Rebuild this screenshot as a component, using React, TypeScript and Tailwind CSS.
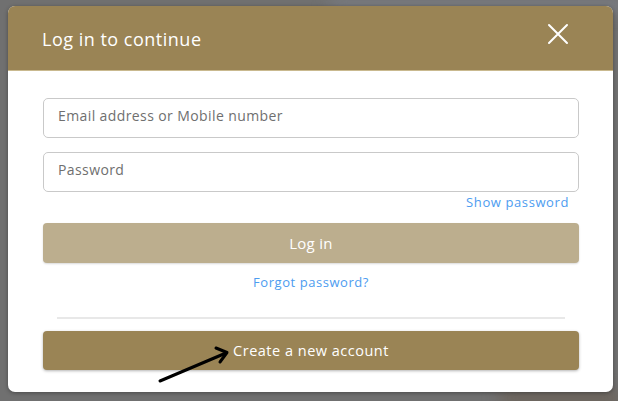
import React from "react";

export default function App() {
  const font = { fontFamily: '"Open Sans", "Noto Sans", sans-serif' };
  return (
    <div className="relative w-[618px] h-[401px] overflow-hidden bg-[#707070] pt-[6px] pl-[8px]" style={font}>
      <div className="absolute left-[330px] top-0 w-[300px] h-[12px] bg-[#7c7f86] blur-sm" />
      <div className="absolute left-[500px] top-[392px] w-[120px] h-[12px] bg-[#6a5e52] blur-sm" />
      <div className="relative w-[605px] h-[386px] rounded-[7px] overflow-hidden bg-white shadow-[0_1px_4px_rgba(0,0,0,0.35)] flex flex-col">
        <div className="h-[65px] bg-[#9a8455] flex items-center justify-between pl-[34px] pr-[44px] border-b border-[#c9b98f]">
          <span className="text-white text-[18px] tracking-[0.5px] mt-[2px]">Log in to continue</span>
          <svg width="22" height="22" viewBox="0 0 22 22" className="mt-[-8px]">
            <path d="M2 2 L20 20 M20 2 L2 20" stroke="#ffffff" strokeWidth="2" strokeLinecap="round" />
          </svg>
        </div>
        <div className="flex flex-col pl-[35px] pr-[34px] pt-[27px]">
          <div className="h-[40px] rounded-[5px] border border-[#c9c9c9] flex items-center pl-[14px] pb-[6px] text-[14px] tracking-[0.4px] text-[#6f6f6f]">
            Email address or Mobile number
          </div>
          <div className="mt-[14px] h-[40px] rounded-[5px] border border-[#c9c9c9] flex items-center pl-[14px] pb-[6px] text-[14px] tracking-[0.4px] text-[#6f6f6f]">
            Password
          </div>
          <div className="flex justify-end pr-[10px] mt-[1px] h-[20px] items-center text-[13px] tracking-[0.6px] text-[#4d9cf0]">
            Show password
          </div>
          <div className="mt-[10px] h-[40px] rounded-[4px] bg-[#bcae8e] shadow-[0_1px_2px_rgba(0,0,0,0.15)] flex items-center justify-center text-white text-[15px] tracking-[0.3px]">
            Log in
          </div>
          <div className="mt-[10px] h-[20px] flex items-center justify-center text-[13px] tracking-[0.55px] text-[#4d9cf0]">
            Forgot password?
          </div>
          <div className="mt-[24px] mx-[14px] h-[2px] bg-[#e8e8e8]" />
          <div className="relative mt-[12px] h-[39px] rounded-[4px] bg-[#9a8455] shadow-[0_1px_3px_rgba(0,0,0,0.3)] flex items-center justify-center text-white text-[14.5px] tracking-[0.5px]">
            Create a new account
          </div>
        </div>
        <svg className="absolute left-0 top-0 pointer-events-none" width="605" height="386" viewBox="0 0 605 386">
          <path d="M152 375 L218 347" stroke="#000" strokeWidth="3" strokeLinecap="round" />
          <path d="M208 342 L219 346.5 L212 356" stroke="#000" strokeWidth="3" fill="none" strokeLinecap="round" strokeLinejoin="round" />
        </svg>
      </div>
    </div>
  );
}
